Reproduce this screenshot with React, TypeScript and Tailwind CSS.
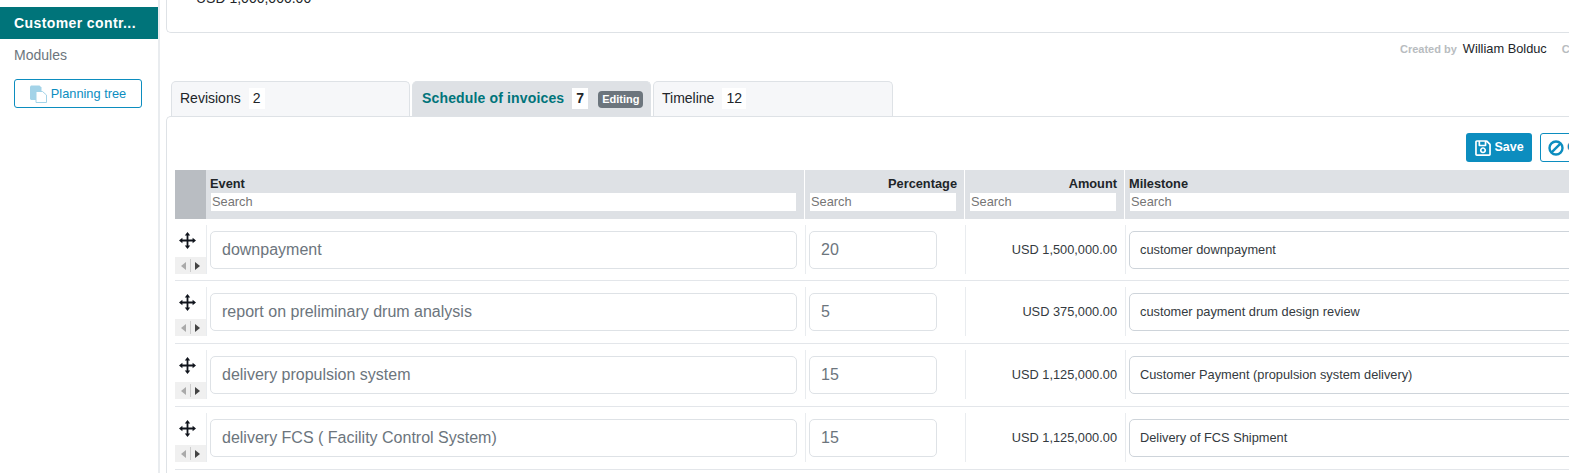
import { FaRegSave } from "react-icons/fa";

const rows = [
  { event: "downpayment", pct: "20", amount: "USD 1,500,000.00", milestone: "customer downpayment" },
  { event: "report on preliminary drum analysis", pct: "5", amount: "USD 375,000.00", milestone: "customer payment drum design review" },
  { event: "delivery propulsion system", pct: "15", amount: "USD 1,125,000.00", milestone: "Customer Payment (propulsion system delivery)" },
  { event: "delivery FCS ( Facility Control System)", pct: "15", amount: "USD 1,125,000.00", milestone: "Delivery of FCS Shipment" },
];

function PagesIcon() {
  return (
    <svg width="17" height="18" viewBox="0 0 17 18" className="shrink-0">
      <path d="M0 1.5 1 .5h8.5l2 2V15H1l-1-1z" fill="#a3d3e8" />
      <path d="M6 6.5h6.5l4 3.5v7.5H6z" fill="#fff" stroke="#a3d3e8" />
    </svg>
  );
}

function MoveIcon() {
  return (
    <svg width="17" height="17" viewBox="0 0 17 17" className="ml-[4px] shrink-0 text-[#10141c]">
      <path d="M8.5 3v11M3 8.5h11" stroke="currentColor" strokeWidth="1.8" />
      <path d="M8.5 0 5.8 3.4h5.4zM8.5 17l-2.7-3.4h5.4zM0 8.5l3.4-2.7v5.4zM17 8.5l-3.4-2.7v5.4z" fill="currentColor" />
    </svg>
  );
}

function BanIcon() {
  return (
    <svg width="16" height="16" viewBox="0 0 16 16" className="shrink-0 text-[#0c8dbf]">
      <circle cx="8" cy="8" r="6.5" fill="none" stroke="currentColor" strokeWidth="2.4" />
      <path d="M3.6 12.4 12.4 3.6" stroke="currentColor" strokeWidth="2.4" />
    </svg>
  );
}

function Search() {
  return (
    <div className="h-[18px] bg-white pl-px text-[12.8px] font-normal leading-[18px] text-[#757575]">Search</div>
  );
}

export default function App() {
  return (
    <div className="flex h-[473px] w-[1569px] overflow-hidden bg-white font-['Liberation_Sans',Arial,sans-serif] text-[#212529]">
      {/* Sidebar */}
      <aside className="w-[160px] shrink-0 border-r-2 border-[#e9ecef] pt-[7px]">
        <div className="flex h-[32px] items-center bg-[#00747a] px-[14px] text-[14px] font-bold tracking-[0.4px] text-white">
          Customer contr...
        </div>
        <div className="mt-[7px] px-[14px] text-[14px] leading-[18px] text-[#6c757d]">Modules</div>
        <button className="ml-[14px] mt-[15px] flex h-[29px] w-[128px] items-center justify-center gap-[4px] rounded-[3px] border border-[#0c8dbf] text-[12.8px] text-[#0c8dbf]">
          <PagesIcon />
          Planning tree
        </button>
      </aside>

      {/* Main */}
      <main className="w-[1490px] shrink-0 pl-[6px]">
        <div className="h-[33px] overflow-hidden rounded-bl-[5px] border-b border-l border-[#dee2e6] pl-[29px]">
          <div className="mt-[-11px] text-[14px] leading-[18px]">USD 1,000,000.00</div>
        </div>

        <div className="flex h-[48px] items-start gap-[15px] whitespace-nowrap pl-[1234px] pt-[8px] text-[12.8px] leading-[16px]">
          <div>
            <span className="mr-[6px] text-[11px] font-bold text-[#b8bcc0]">Created by</span>
            William Bolduc
          </div>
          <div>
            <span className="mr-[6px] text-[11px] font-bold text-[#b8bcc0]">Created on</span>
            Jan 12, 2021
          </div>
        </div>

        {/* Tabs */}
        <div className="flex gap-[2px] pl-[5px]">
          <div className="flex h-[35px] w-[239px] items-center rounded-t-[5px] border border-b-0 border-[#dee2e6] bg-[#f6f7f9] pb-[2px] pl-[8px] text-[14px]">
            Revisions
            <span className="ml-[8px] bg-white px-[4px]">2</span>
          </div>
          <div className="flex h-[35px] w-[239px] items-center rounded-t-[5px] border border-b-0 border-[#dee2e6] bg-[#dee1e5] pb-[2px] pl-[9px] text-[14px] font-bold tracking-[0.15px] text-[#00747a]">
            Schedule of invoices
            <span className="ml-[8px] bg-white px-[4px] text-[#212529]">7</span>
            <span className="ml-[10px] mt-[2px] rounded-[4px] bg-[#6c757d] px-[4px] py-[1.5px] text-[11px] leading-[14px] tracking-normal text-white">
              Editing
            </span>
          </div>
          <div className="flex h-[35px] w-[240px] items-center rounded-t-[5px] border border-b-0 border-[#dee2e6] bg-[#f6f7f9] pb-[2px] pl-[8px] text-[14px]">
            Timeline
            <span className="ml-[8px] bg-white px-[4px]">12</span>
          </div>
        </div>

        {/* Panel */}
        <section className="h-[400px] rounded-tl-[5px] border-l border-t border-[#dee2e6] pl-[8px] pt-[16px]">
          <div className="flex justify-end gap-[8px] whitespace-nowrap pr-[40px]">
            <button className="flex h-[29px] w-[66px] items-center justify-center gap-[2px] rounded-[3px] bg-[#0c8dbf] text-[12.5px] font-bold text-white">
              <FaRegSave className="text-[18px]" />
              Save
            </button>
            <button className="flex h-[29px] w-[70px] items-center gap-[3px] rounded-[3px] border border-[#0c8dbf] pl-[7px] text-[12.5px] font-bold text-[#0c8dbf]">
              <BanIcon />
              Cancel
            </button>
          </div>

          {/* Table head */}
          <div className="mt-[8px] flex h-[49px] gap-px text-[12.8px] font-bold">
            <div className="-mr-px w-[31px] bg-[#b9bdc2]" />
            <div className="w-[598px] bg-[#dee1e5] pl-[5px] pr-[8px] pt-[7px]">
              <div className="mb-[2px] ml-[-1px] leading-[14px]">Event</div>
              <Search />
            </div>
            <div className="w-[159px] bg-[#dee1e5] pl-[5px] pr-[8px] pt-[7px] text-right">
              <div className="mb-[2px] mr-[-1px] leading-[14px]">Percentage</div>
              <div className="text-left"><Search /></div>
            </div>
            <div className="w-[159px] bg-[#dee1e5] pl-[5px] pr-[8px] pt-[7px] text-right">
              <div className="mb-[2px] mr-[-1px] leading-[14px]">Amount</div>
              <div className="text-left"><Search /></div>
            </div>
            <div className="w-[500px] bg-[#dee1e5] pl-[5px] pr-[8px] pt-[7px]">
              <div className="mb-[2px] ml-[-1px] leading-[14px]">Milestone</div>
              <Search />
            </div>
          </div>

          {/* Rows */}
          <div>
            {rows.map((row) => (
              <div key={row.event} className="mb-[0.9px] flex h-[62px] items-start border-b border-[#e3e6ea] pt-[5.5px] first:pt-[6px]">
                <div className="flex h-[49px] w-[32px] shrink-0 flex-col justify-between border-r border-[#e9ecef] pt-[7px]">
                  <MoveIcon />
                  <div className="flex h-[17px] w-[31px] items-center justify-center gap-[4px] bg-[#f0f0f0]">
                    <span className="h-0 w-0 border-y-[4px] border-r-[5px] border-y-transparent border-r-[#aaa]" />
                    <span className="h-[13px] w-px bg-[#ccc]" />
                    <span className="h-0 w-0 border-y-[4px] border-l-[5px] border-y-transparent border-l-[#444]" />
                  </div>
                </div>
                <div className="flex h-[49px] w-[598px] shrink-0 items-center pl-[3px] pr-[8px]">
                  <div className="flex h-[38px] w-full items-center rounded-[5px] border border-[#dee2e6] px-[11px] text-[16px] text-[#6c757d]">
                    {row.event}
                  </div>
                </div>
                <div className="flex h-[49px] w-[160px] shrink-0 items-center border-l border-[#e9ecef] pl-[3px]">
                  <div className="flex h-[38px] w-[128px] items-center rounded-[5px] border border-[#dee2e6] px-[11px] text-[16px] text-[#6c757d]">
                    {row.pct}
                  </div>
                </div>
                <div className="flex h-[49px] w-[160px] shrink-0 items-center justify-end border-l border-[#e9ecef] pr-[8px] text-[12.8px] text-[#343a40]">
                  {row.amount}
                </div>
                <div className="flex h-[49px] w-[500px] shrink-0 items-center border-l border-[#e9ecef] pl-[3px]">
                  <div className="flex h-[38px] w-[490px] items-center rounded-[5px] border border-[#ced4da] px-[10px] text-[12.8px] text-[#343a40]">
                    {row.milestone}
                  </div>
                </div>
              </div>
            ))}
          </div>
        </section>
      </main>
    </div>
  );
}
